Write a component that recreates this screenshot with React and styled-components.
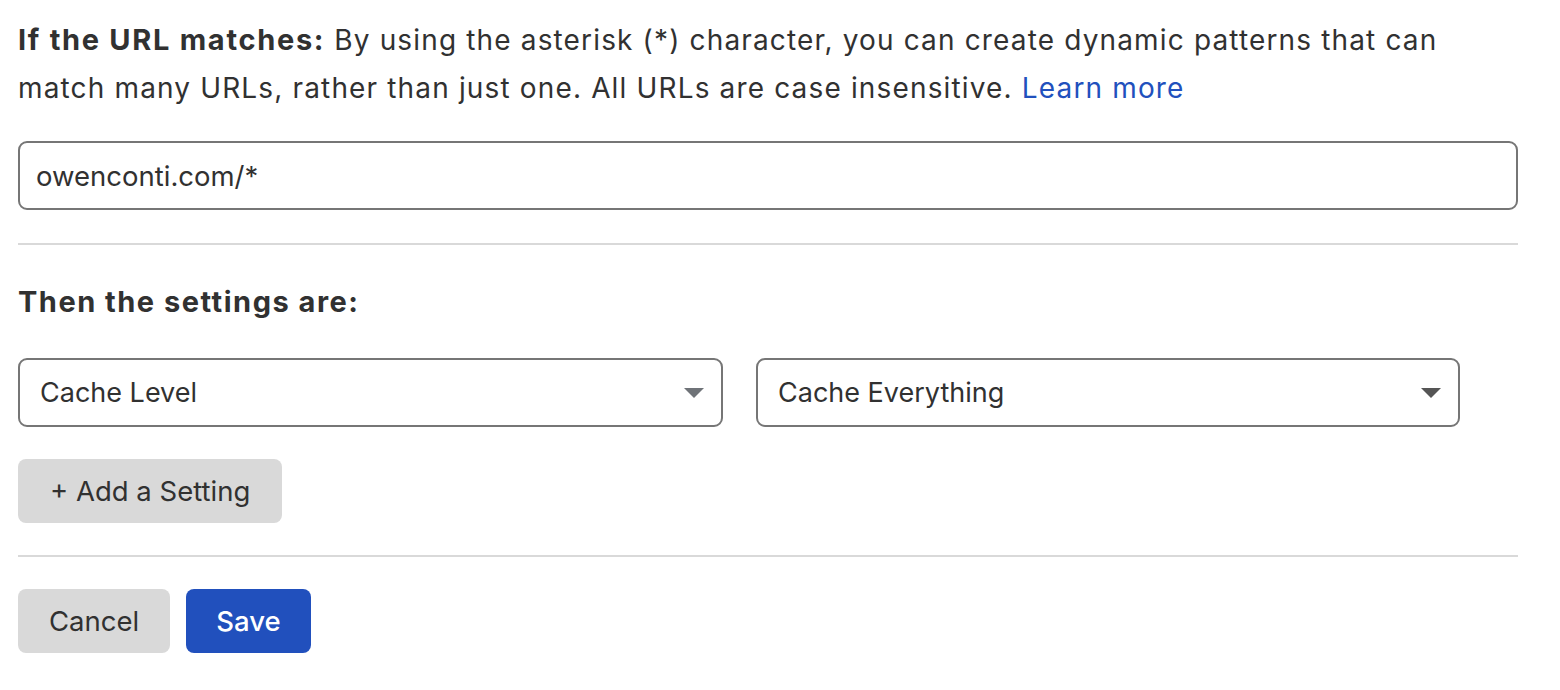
import React from "react";
import styled, { createGlobalStyle } from "styled-components";

const GlobalStyle = createGlobalStyle`
  body {
    margin: 0;
    background: #ffffff;
    font-family: Inter, "Noto Sans", "Liberation Sans", sans-serif;
    color: #313131;
  }
`;

const Page = styled.div`
  width: 1500px;
  padding: 16px 0 0 18px;
`;

const Intro = styled.p`
  margin: 0;
  font-size: 28px;
  line-height: 48px;
  letter-spacing: 1.15px;
  color: #313131;

  strong {
    font-size: 29px;
    font-weight: 700;
    letter-spacing: 1.7px;
  }
`;

const Link = styled.a`
  color: #2150bd;
  text-decoration: none;
  cursor: pointer;
`;

const TextInput = styled.input`
  display: block;
  box-sizing: border-box;
  width: 100%;
  height: 69px;
  margin-top: 29px;
  padding: 0 16px;
  border: 2px solid #767676;
  border-radius: 9px;
  font-family: inherit;
  font-size: 27.5px;
  color: #313131;
  outline: none;
`;

const Divider = styled.hr`
  margin: ${(p) => p.$top}px 0 0;
  border: 0;
  height: 2px;
  background: #d9d9d9;
`;

const Heading = styled.h3`
  margin: 33px 0 0;
  font-size: 29px;
  line-height: 48px;
  font-weight: 700;
  letter-spacing: 1.5px;
  color: #313131;
`;

const SelectRow = styled.div`
  display: flex;
  gap: 33px;
  margin-top: 32px;
`;

const Select = styled.div`
  box-sizing: border-box;
  width: ${(p) => p.$width}px;
  height: 69px;
  padding: 0 17px 0 20px;
  border: 2px solid #767676;
  border-radius: 9px;
  display: flex;
  align-items: center;
  justify-content: space-between;
  font-size: 27px;
  color: #313131;
  cursor: pointer;
`;

const Caret = styled.span`
  width: 0;
  height: 0;
  border-left: 10px solid transparent;
  border-right: 10px solid transparent;
  border-top: 10px solid ${(p) => p.$color};
`;

const Button = styled.button`
  box-sizing: border-box;
  height: 64px;
  padding: 0 ${(p) => p.$pad}px;
  border: 0;
  border-radius: 8px;
  background: ${(p) => (p.$primary ? "#2150bd" : "#d9d9d9")};
  color: ${(p) => (p.$primary ? "#ffffff" : "#313131")};
  font-family: inherit;
  font-size: 27.5px;
  font-weight: ${(p) => (p.$primary ? 500 : 400)};
  cursor: pointer;
`;

const AddRow = styled.div`
  margin-top: 32px;
`;

const Actions = styled.div`
  display: flex;
  gap: 16px;
  margin-top: 32px;
`;

export default function App() {
  return (
    <Page>
      <GlobalStyle />
      <Intro>
        <strong>If the URL matches:</strong> By using the asterisk (*) character, you
        can create dynamic patterns that can
        <br />
        match many URLs, rather than just one. All URLs are case insensitive.{" "}
        <Link>Learn more</Link>
      </Intro>
      <TextInput defaultValue="owenconti.com/*" />
      <Divider $top={33} />
      <Heading>Then the settings are:</Heading>
      <SelectRow>
        <Select $width={705}>
          <span>Cache Level</span>
          <Caret $color="#6f7378" />
        </Select>
        <Select $width={704}>
          <span>Cache Everything</span>
          <Caret $color="#555555" />
        </Select>
      </SelectRow>
      <AddRow>
        <Button $pad={32}>+ Add a Setting</Button>
      </AddRow>
      <Divider $top={32} />
      <Actions>
        <Button $pad={31}>Cancel</Button>
        <Button $pad={30} $primary>
          Save
        </Button>
      </Actions>
    </Page>
  );
}
